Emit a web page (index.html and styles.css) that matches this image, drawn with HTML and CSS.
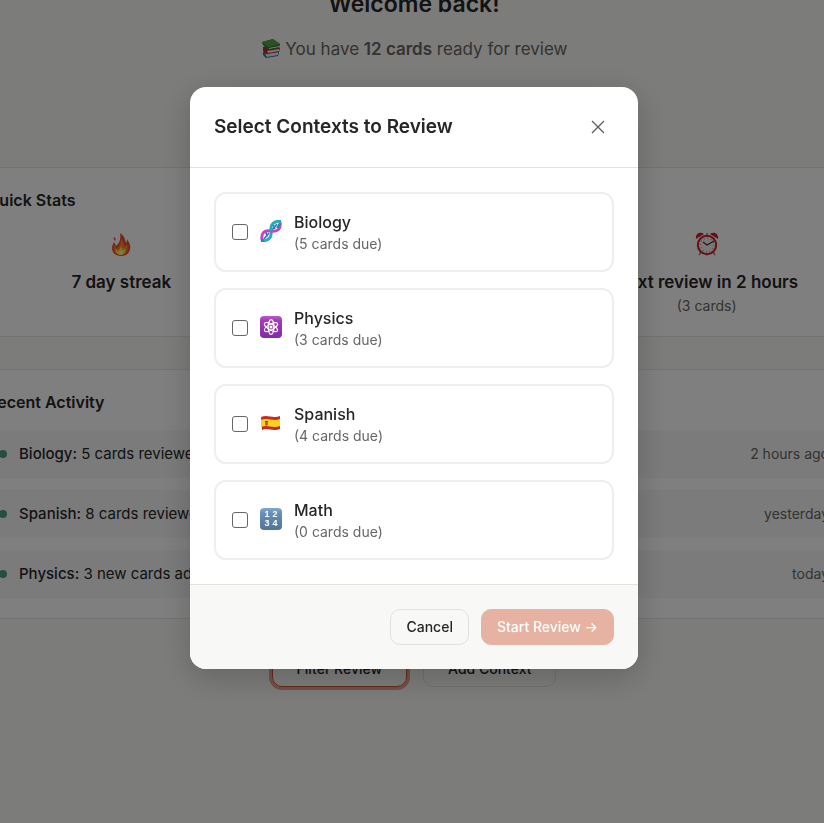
FILE: index.html
```html
<!DOCTYPE html>
<html lang="en">
<head>
<meta charset="utf-8">
<meta name="viewport" content="width=device-width, initial-scale=1">
<title>Select Contexts to Review</title>
<link rel="stylesheet" href="styles.css">
</head>
<body>
<main class="page">
  <div class="dashboard">
    <header class="welcome">
      <h1>Welcome back!</h1>
      <p>
        <svg class="books" viewBox="0 0 20 20" aria-hidden="true">
          <path d="M2 14l13-2 3 3-1 3-12 2-3-3z" fill="#3866b5"/>
          <path d="M4 16l13-2v3L6 19z" fill="#ecebe5"/>
          <path d="M2 9l13-1 4 2-1 4-12 2-4-3z" fill="#c02922"/>
          <path d="M6 13l12-2v2L7 15z" fill="#f0eee8"/>
          <path d="M1 4l11-3 7 5-1 4-11 2-5-5z" fill="#377b31"/>
          <path d="M1 4l11-3 7 5-12 3z" fill="#55a548"/>
          <path d="M8 10l10-2v1L8 11z" fill="#eee"/>
        </svg>
        You have <strong>12 cards</strong> ready for review
      </p>
    </header>

    <section class="card">
      <h2>Quick Stats</h2>
      <div class="stats">
        <div class="stat">
          <svg class="stat-icon" viewBox="0 0 24 24" aria-hidden="true">
            <path d="M11 1c5 3 5 7 6 10 1-1 1-3 1-4 4 6 4 9 2 13-2 3-5 4-8 4-5 0-9-3-9-8 0-2 1-4 2-6l2 4c4-3 5-8 4-13z" fill="#ee4a2c"/>
            <path d="M12 7c3 3 3 6 3 8l3-3c2 5 0 11-6 11-5 0-8-4-7-9l3 3c3-3 4-6 4-10z" fill="#f98b2c"/>
            <path d="M12 13c0 3 2 4 2 5l2-2c1 4-1 7-4 7-4 0-6-3-5-6l2 2c2-2 3-4 3-6z" fill="#ffe04a"/>
            <circle cx="12" cy="21" r="2" fill="#fff5a8"/>
            <path d="M5 5c2 1 2 3 1 4-1-1-2-3-1-4z" fill="#ee4a2c"/>
          </svg>
          <strong>7 day streak</strong>
        </div>
        <div class="stat"></div>
        <div class="stat">
          <svg class="stat-icon" viewBox="0 0 24 24" aria-hidden="true">
            <path d="M6 20l-2 3M18 20l2 3M12 1v3" stroke="#888" stroke-width="1.5"/>
            <path d="M1 7C0 2 5-1 9 2zM23 7c1-5-4-8-8-5z" fill="#c9202b"/>
            <circle cx="12" cy="13" r="9.2" fill="#f5f1f0" stroke="#c9202b" stroke-width="2"/>
            <circle cx="12" cy="13" r="6.7" fill="none" stroke="#e08a8e" stroke-width="1.4" stroke-dasharray="1 2.5"/>
            <path d="M8 10l4 3 7-4" fill="none" stroke="#333" stroke-width="1.1"/>
          </svg>
          <strong>Next review in 2 hours</strong>
          <span class="note">(3 cards)</span>
        </div>
      </div>
    </section>

    <section class="card">
      <h2>Recent Activity</h2>
      <ul class="activity">
        <li><span class="dot"></span><span class="event"><b>Biology:</b> 5 cards reviewed</span><time class="note">2 hours ago</time></li>
        <li><span class="dot"></span><span class="event"><b>Spanish:</b> 8 cards reviewed</span><time class="note">yesterday</time></li>
        <li><span class="dot"></span><span class="event"><b>Physics:</b> 3 new cards added</span><time class="note">today</time></li>
      </ul>
    </section>

    <div class="actions">
      <button class="btn wide focused" type="button">Filter Review</button>
      <button class="btn wide" type="button">Add Context</button>
    </div>
  </div>
</main>

<div class="overlay">
  <form class="modal" role="dialog" aria-modal="true" aria-labelledby="modal-title">
    <header class="modal-header">
      <h2 id="modal-title">Select Contexts to Review</h2>
      <button class="close" type="button" aria-label="Close">
        <svg viewBox="0 0 14 14" aria-hidden="true"><path d="M1 1l12 12M13 1L1 13"/></svg>
      </button>
    </header>
    <div class="modal-body">
      <label class="option" for="biology">
        <input type="checkbox" id="biology">
        <svg class="emoji" viewBox="0 0 22 22" aria-hidden="true">
          <path d="M4 19L9 13M7 17L6 12M12 10l5-6M15 9l-2-5" stroke="#3d6fc0" stroke-width="1.6"/>
          <path d="M1 21C9 21 12 17 11 11" fill="none" stroke="#23aeba" stroke-width="3"/>
          <path d="M2 20C1 13 4 10 11 11S21 9 20 2" fill="none" stroke="#cb40cb" stroke-width="3"/>
          <path d="M11 11C10 4 14 1 21 1" fill="none" stroke="#23aeba" stroke-width="3"/>
          <path d="M1 21l3-1M17 8l3-4" stroke="#1593a4" stroke-width="2.5"/>
        </svg>
        <span class="option-text"><span class="name">Biology</span><span class="due">(5 cards due)</span></span>
      </label>
      <label class="option" for="physics">
        <input type="checkbox" id="physics">
        <svg class="emoji" viewBox="0 0 22 22" aria-hidden="true">
          <defs><linearGradient id="purple" x2="0" y2="1"><stop stop-color="#bd55cf"/><stop offset=".2" stop-color="#a33abd"/><stop offset="1" stop-color="#832aa2"/></linearGradient></defs>
          <rect width="22" height="22" rx="4" fill="url(#purple)"/>
          <g fill="none" stroke="#fff" stroke-width="1.2">
            <ellipse cx="11" cy="11" rx="2.8" ry="7.4"/>
            <ellipse cx="11" cy="11" rx="2.8" ry="7.4" transform="rotate(60 11 11)"/>
            <ellipse cx="11" cy="11" rx="2.8" ry="7.4" transform="rotate(120 11 11)"/>
          </g>
          <circle cx="11" cy="11" r="1.5" fill="#fff"/>
        </svg>
        <span class="option-text"><span class="name">Physics</span><span class="due">(3 cards due)</span></span>
      </label>
      <label class="option" for="spanish">
        <input type="checkbox" id="spanish">
        <svg class="emoji" viewBox="0 0 22 22" aria-hidden="true">
          <path d="M1 5c7-3 11 2 19-1v13c-8 3-12-2-18 1z" fill="#c62b22"/>
          <path d="M1 8c7-3 12 2 19-1v7c-8 3-12-2-19 1z" fill="#fdcf21"/>
          <path d="M5 9h3v4l-1.5 1L5 13z" fill="#b96a32"/>
          <path d="M5.500 9h2v1h-2z" fill="#a62226"/>
        </svg>
        <span class="option-text"><span class="name">Spanish</span><span class="due">(4 cards due)</span></span>
      </label>
      <label class="option" for="math">
        <input type="checkbox" id="math">
        <svg class="emoji" viewBox="0 0 22 22" aria-hidden="true">
          <defs><linearGradient id="blue" x2="0" y2="1"><stop stop-color="#80a8cd"/><stop offset=".25" stop-color="#658fb7"/><stop offset="1" stop-color="#527398"/></linearGradient></defs>
          <rect width="22" height="22" rx="4" fill="url(#blue)"/>
          <g class="digits"><text x="7" y="9">1</text><text x="15" y="9">2</text><text x="7" y="18">3</text><text x="15" y="18">4</text></g>
        </svg>
        <span class="option-text"><span class="name">Math</span><span class="due">(0 cards due)</span></span>
      </label>
    </div>
    <footer class="modal-footer">
      <button class="btn" type="button">Cancel</button>
      <button class="btn primary" type="submit" disabled>Start Review →</button>
    </footer>
  </form>
</div>
</body>
</html>
```
FILE: styles.css
```css
* { box-sizing: border-box; }
body {
  margin: 0;
  overflow: hidden;
  background: #f9f8f5;
  color: #262626;
  font-family: Inter, "Liberation Sans", sans-serif;
  font-size: 16px;
  line-height: 24px;
}
h1, h2, p, ul { margin: 0; padding: 0; }
h2 { font-size: 16px; font-weight: 600; }
b { font-weight: 500; }
button, input { font: inherit; margin: 0; }

.page {
  display: grid;
  grid-template-columns: minmax(904px, 1fr);
  justify-content: center;
  min-height: 100vh;
  padding-left: 4px;
  overflow: hidden;
}
.dashboard {
  display: flex;
  flex-direction: column;
  gap: 32px;
  width: 100%;
  max-width: 904px;
  margin: -12px auto 0;
}
.welcome { padding-bottom: 72px; text-align: center; }
.welcome h1 { font-size: 23px; line-height: 32px; font-weight: 600; }
.welcome p { margin-top: 15px; font-size: 17px; line-height: 28px; color: #666; }
.welcome strong { font-weight: 600; }
.books { width: 20px; height: 20px; vertical-align: -3px; }

.card { padding: 20px 24px; background: #fff; border: 1px solid #e8e7e3; }
.stats { display: grid; grid-template-columns: repeat(3, 1fr); gap: 24px; margin-top: 16px; min-height: 88px; }
.stat { display: flex; flex-direction: column; align-items: center; }
.stat strong { font-size: 17px; line-height: 28px; font-weight: 600; }
.stat-icon { width: 24px; height: 24px; margin: 4px 0 12px; }
.note { color: #666; font-size: 14px; line-height: 20px; }
.activity { display: grid; gap: 12px; margin-top: 16px; list-style: none; }
.activity li { display: flex; align-items: center; gap: 12px; padding: 12px; background: #f7f7f6; }
.activity time { margin-left: auto; }
.event { font-size: 15px; }
.dot { width: 8px; height: 8px; border-radius: 50%; background: #4e9b7b; }
.actions { display: flex; justify-content: center; gap: 16px; }

.btn {
  height: 36px;
  padding: 0 15px;
  border: 1px solid #e2e1dd;
  border-radius: 10px;
  background: transparent;
  color: #262626;
  font-size: 14px;
  line-height: 20px;
  font-weight: 500;
}
.btn.wide { padding: 0 24px; }
.btn.focused { border-color: #c9532f; box-shadow: 0 0 0 3px rgba(217, 103, 74, .6); }
.btn.primary { border-color: #e6b3a3; background: #e6b3a3; color: #fff; }

.overlay {
  position: fixed;
  inset: 0;
  display: flex;
  align-items: flex-start;
  justify-content: center;
  padding: 87px 0 0 4px;
  background: rgba(0, 0, 0, .5);
}
.modal {
  width: 100%;
  max-width: 448px;
  overflow: hidden;
  border-radius: 16px;
  background: #fff;
  box-shadow: 0 8px 32px rgba(0, 0, 0, .2);
}
.modal-header {
  display: flex;
  align-items: center;
  justify-content: space-between;
  padding: 24px;
  border-bottom: 1px solid #e2e2df;
}
.modal-header h2 { font-size: 19px; line-height: 32px; }
.close { display: grid; place-items: center; width: 32px; height: 32px; padding: 0; border: 0; background: none; }
.close svg { width: 14px; height: 14px; fill: none; stroke: #5c5c5c; stroke-width: 1.3; }
.modal-body { display: grid; gap: 16px; padding: 24px; }
.option { display: flex; align-items: center; gap: 12px; padding: 16px; border: 2px solid #eeeeea; border-radius: 12px; }
.option input { appearance: none; width: 16px; height: 16px; border: 1px solid #666; border-radius: 3px; background: #fff; }
.emoji { width: 22px; height: 22px; margin-bottom: 2px; }
.option-text { display: grid; }
.name { font-weight: 500; }
.due { color: #666; font-size: 14px; line-height: 20px; }
.digits { fill: #fff; font-family: "Liberation Sans", sans-serif; font-size: 9px; font-weight: 700; text-anchor: middle; }
.modal-footer {
  display: flex;
  justify-content: flex-end;
  gap: 12px;
  padding: 24px;
  border-top: 1px solid #e2e2df;
  background: #f8f8f6;
}
```
